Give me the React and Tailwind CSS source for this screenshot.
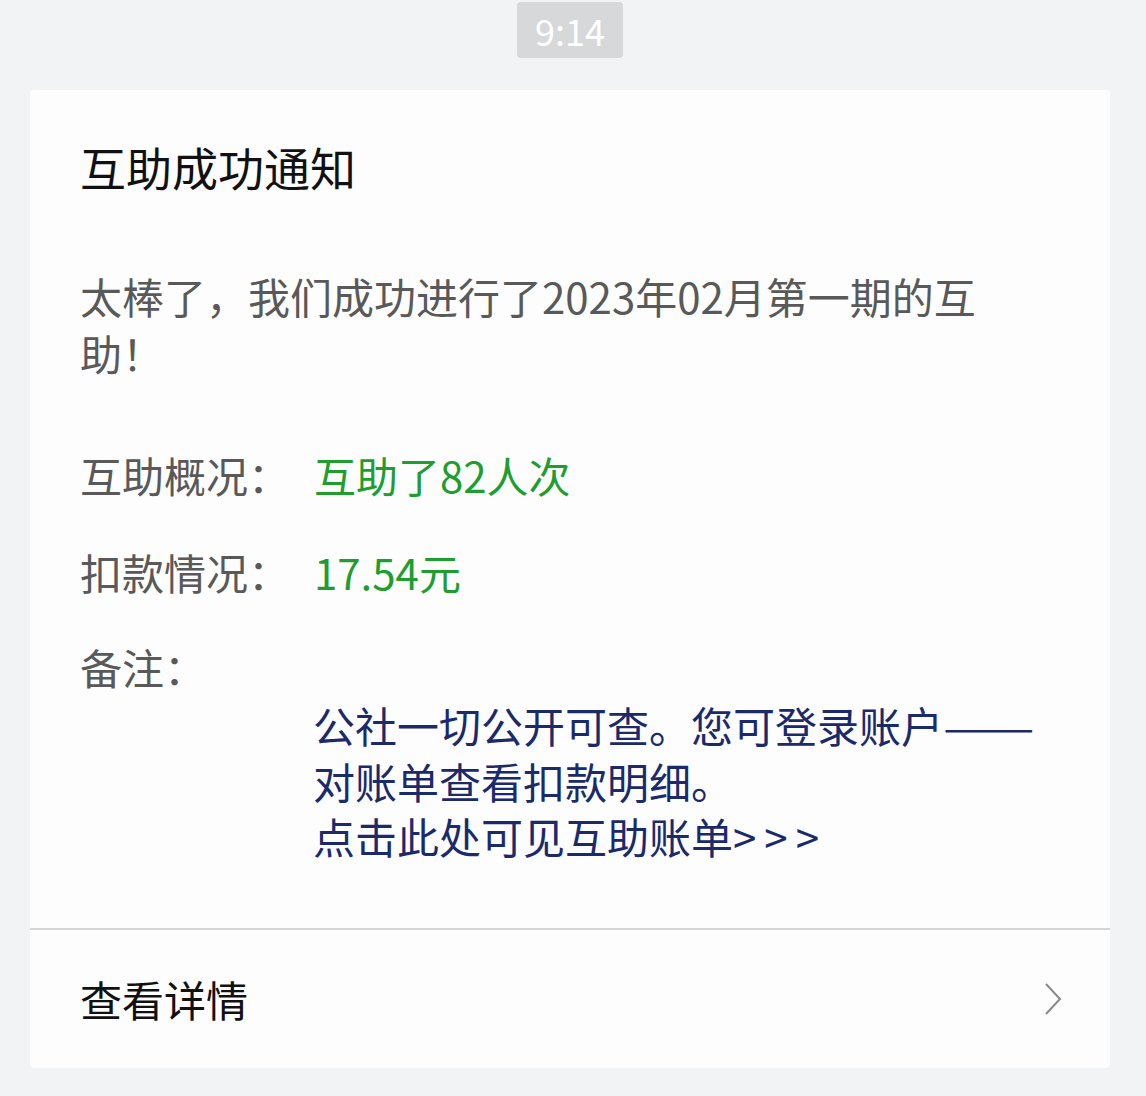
// 互助成功通知 — WeChat style template message card

const FONT = { fontFamily: '"Noto Sans CJK SC", "Noto Sans", sans-serif' };

function Row({ label, children }) {
  return (
    <div className="flex items-center h-[57px]">
      <span className="w-[234px] shrink-0 text-[#595959]">{label}</span>
      {children}
    </div>
  );
}

export default function App() {
  return (
    <div className="min-h-[1096px] bg-[#f2f3f5] pt-[2px]" style={FONT}>
      {/* Time stamp */}
      <div className="flex justify-center">
        <div className="ml-[-6px] w-[106px] h-[56px] rounded-[4px] bg-[#d7d8da] flex items-center justify-center text-white text-[36px] leading-none">
          9:14
        </div>
      </div>

      {/* Card */}
      <div className="mt-[32px] ml-[30px] w-[1080px] bg-[#fdfdfe] rounded-[4px]">
        <div className="pt-[46px] pl-[50px] pr-[50px] pb-[64px]">
          <h1 className="text-[46px] leading-[60px] text-[#111111]">互助成功通知</h1>

          <p className="mt-[71px] w-[920px] text-[42px] leading-[57px] text-[#595959]">
            太棒了，我们成功进行了2023年02月第一期的互助！
          </p>

          <div className="mt-[65px] text-[42px]">
            <Row label="互助概况：">
              <span className="text-[#1f9d2f]">互助了82人次</span>
            </Row>
            <div className="mt-[40px]">
              <Row label="扣款情况：">
                <span className="text-[#1f9d2f]">17.54元</span>
              </Row>
            </div>
            <div className="mt-[38px]">
              <Row label="备注：" />
            </div>
            <div className="mt-[2px] ml-[233px] text-[#1b2a6b] leading-[55.5px]">
              <div>
                公社一切公开可查。您可登录账户
                <span className="inline-block origin-left scale-x-130">——</span>
              </div>
              <div>对账单查看扣款明细。</div>
              <div>
                点击此处可见互助账单
                <span className="tracking-[8px]">&gt;&gt;&gt;</span>
              </div>
            </div>
          </div>
        </div>

        {/* Footer link */}
        <div className="border-t-2 border-[#d4d4d6] h-[140px] pl-[50px] pr-[48px] flex items-center justify-between">
          <span className="text-[42px] text-[#111111]">查看详情</span>
          <svg width="18" height="34" viewBox="0 0 18 34" fill="none">
            <polyline points="2,2 16,17 2,32" stroke="#8a8a8a" strokeWidth="2" />
          </svg>
        </div>
      </div>
    </div>
  );
}
